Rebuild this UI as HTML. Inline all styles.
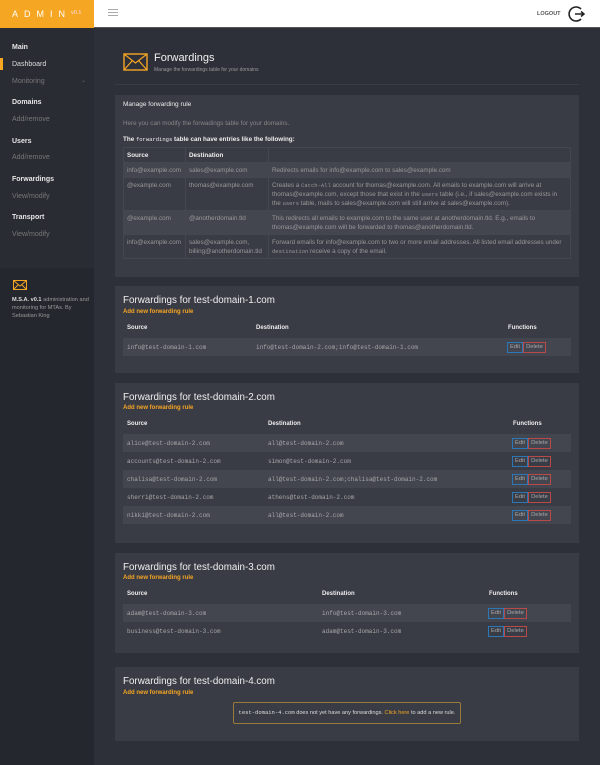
<!DOCTYPE html>
<html><head><meta charset="utf-8"><style>
*{box-sizing:border-box;margin:0;padding:0}
body{width:600px;height:765px;background:#2e3039;font-family:"Liberation Sans",sans-serif;position:relative;overflow:hidden;color:#bbb}
.abs{position:absolute}
#top{left:0;top:0;width:94px;height:28px;background:#f5a623}
#hdr{left:94px;top:0;width:506px;height:28px;background:#fff;border-bottom:1px solid #555}
#side{left:0;top:28px;width:94px;height:737px;background:#2a2c34}
.sh{position:absolute;left:12px;font-size:7px;font-weight:bold;color:#e6e6e6}
.si{position:absolute;left:12px;font-size:7px;color:#777}
.card{position:absolute;left:115px;width:464px;background:#393b45}
.ct{position:absolute;left:8px;font-size:9.8px;color:#f0f0f0}
.al{position:absolute;left:8px;font-size:6px;font-weight:bold;color:#f5a623}
.th{position:absolute;font-size:6px;font-weight:bold;color:#eee}
.row{position:absolute;left:8px;width:448px;height:18px}
.row.s{background:#43454f}
.m{position:absolute;font-family:"Liberation Mono",monospace;font-size:6px;color:#a8a8a8;top:6px}
.bt{position:absolute;top:4px;height:11px;font-size:5.8px;color:#aaa;line-height:9px;text-align:center}
.e{border:1px solid #2a78b5;width:16px}
.d{border:1px solid #b84a4a;width:23px}
table{border-collapse:collapse;font-size:6.3px;color:#999;position:absolute;left:8px;top:52px;width:448px}
td,th{border:1px solid #444650;padding:2.5px 3px;vertical-align:top;line-height:9px;text-align:left}
th{color:#eee;font-weight:bold}
tr.s td{background:#43454f}
code{font-family:"Liberation Mono",monospace;font-size:5.5px}
</style></head><body>
<div id="top" class="abs"><span class="abs" style="left:12px;top:9px;font-size:9px;letter-spacing:6px;color:#fff">ADMIN</span><span class="abs" style="left:71px;top:10px;font-size:5.5px;color:#fde">v0.1</span></div>
<div id="hdr" class="abs">
<div class="abs" style="left:14px;top:9px;width:10px;height:1px;background:#aaa;box-shadow:0 3px #aaa,0 6px #aaa"></div>
<span class="abs" style="left:443px;top:11px;font-size:5.5px;font-weight:bold;color:#555">LOGOUT</span>
<svg class="abs" style="left:474px;top:5px" width="18" height="18" viewBox="0 0 18 18"><path d="M13 4A7 7 0 1 0 13 14" fill="none" stroke="#222" stroke-width="1.6"/><path d="M7 9H16M13 6.5L16 9L13 11.5" fill="none" stroke="#222" stroke-width="1.5"/></svg>
</div>
<div id="side" class="abs">
<div class="sh" style="top:16px">Main</div>
<div class="abs" style="left:0;top:30px;width:3px;height:12px;background:#f5a623"></div>
<div class="sh" style="top:33px;font-weight:normal;color:#ddd">Dashboard</div>
<div class="si" style="top:50px">Monitoring</div><span class="abs" style="left:81px;top:49px;font-size:6px;color:#666">⌄</span>
<div class="sh" style="top:71px">Domains</div>
<div class="si" style="top:88px">Add/remove</div>
<div class="sh" style="top:110px">Users</div>
<div class="si" style="top:126px">Add/remove</div>
<div class="sh" style="top:148px">Forwardings</div>
<div class="si" style="top:165px">View/modify</div>
<div class="sh" style="top:186px">Transport</div>
<div class="si" style="top:203px">View/modify</div>
<div class="abs" style="left:0;top:240px;width:94px;height:497px;background:#25272e">
<svg class="abs" style="left:13px;top:12px" width="14" height="10" viewBox="0 0 14 10"><rect x=".5" y=".5" width="13" height="9" fill="none" stroke="#f5a623"/><path d="M.5 .5L7 6L13.5 .5M.5 9.5L5 5M13.5 9.5L9 5" fill="none" stroke="#f5a623"/></svg>
<div class="abs" style="left:12px;top:28px;font-size:5.6px;line-height:8px;color:#999;width:80px"><b style="color:#ddd">M.S.A. v0.1</b> administration and monitoring for MTAs. By Sebastian King</div>
</div>
</div>
<svg class="abs" style="left:123px;top:53px" width="25" height="18" viewBox="0 0 25 18"><rect x="1" y="1" width="23" height="16" fill="none" stroke="#f5a623" stroke-width="1.4"/><path d="M1 1L12.5 10L24 1M1 17L9 8M24 17L16 8" fill="none" stroke="#f5a623" stroke-width="1.2"/></svg>
<div class="abs" style="left:154px;top:52px;font-size:11px;color:#f0f0f0">Forwardings</div>
<div class="abs" style="left:154px;top:67px;font-size:5px;color:#999">Manage the forwardings table for your domains</div>
<div class="abs" style="left:115px;top:84px;width:464px;height:1px;background:#393b45"></div>

<div class="card" style="top:95px;height:182px">
<div class="abs" style="left:8px;top:6px;font-size:6.5px;color:#eee">Manage forwarding rule</div>
<div class="abs" style="left:8px;top:25px;font-size:6.3px;color:#888">Here you can modify the forwadings table for your domains.</div>
<div class="abs" style="left:8px;top:41px;font-size:6.3px;color:#eee;font-weight:bold">The <code style="font-weight:normal">forwardings</code> table can have entries like the following:</div>
<table>
<tr><th style="width:62px">Source</th><th style="width:83px">Destination</th><th></th></tr>
<tr class="s"><td>info@example.com</td><td>sales@example.com</td><td>Redirects emails for info@example.com to sales@example.com</td></tr>
<tr><td>@example.com</td><td>thomas@example.com</td><td>Creates a <code>Catch-All</code> account for thomas@example.com. All emails to example.com will arrive at thomas@example.com, except those that exist in the <code>users</code> table (i.e., if sales@example.com exists in the <code>users</code> table, mails to sales@example.com will still arrive at sales@example.com).</td></tr>
<tr class="s"><td>@example.com</td><td>@anotherdomain.tld</td><td>This redirects all emails to example.com to the same user at anotherdomain.tld. E.g., emails to thomas@example.com will be forwarded to thomas@anotherdomain.tld.</td></tr>
<tr><td>info@example.com</td><td>sales@example.com, billing@anotherdomain.tld</td><td>Forward emails for info@example.com to two or more email addresses. All listed email addresses under <code>destination</code> receive a copy of the email.</td></tr>
</table>
</div>

<div class="card" style="top:286px;height:87px">
<div class="ct" style="top:9px">Forwardings for test-domain-1.com</div>
<div class="al" style="top:23px">Add new forwarding rule</div>
<div class="th" style="left:12px;top:39px">Source</div><div class="th" style="left:141px;top:39px">Destination</div><div class="th" style="left:393px;top:39px">Functions</div>
<div class="row s" style="top:52px"><span class="m" style="left:4px">info@test-domain-1.com</span><span class="m" style="left:133px">info@test-domain-2.com;info@test-domain-1.com</span><span class="bt e" style="left:384px">Edit</span><span class="bt d" style="left:400px">Delete</span></div>
</div>

<div class="card" style="top:383px;height:160px">
<div class="ct" style="top:9px">Forwardings for test-domain-2.com</div>
<div class="al" style="top:22px">Add new forwarding rule</div>
<div class="th" style="left:12px;top:38px">Source</div><div class="th" style="left:153px;top:38px">Destination</div><div class="th" style="left:398px;top:38px">Functions</div>
<div class="row s" style="top:51px"><span class="m" style="left:4px">alice@test-domain-2.com</span><span class="m" style="left:145px">all@test-domain-2.com</span><span class="bt e" style="left:389px">Edit</span><span class="bt d" style="left:405px">Delete</span></div>
<div class="row" style="top:69px"><span class="m" style="left:4px">accounts@test-domain-2.com</span><span class="m" style="left:145px">simon@test-domain-2.com</span><span class="bt e" style="left:389px">Edit</span><span class="bt d" style="left:405px">Delete</span></div>
<div class="row s" style="top:87px"><span class="m" style="left:4px">chalisa@test-domain-2.com</span><span class="m" style="left:145px">all@test-domain-2.com;chalisa@test-domain-2.com</span><span class="bt e" style="left:389px">Edit</span><span class="bt d" style="left:405px">Delete</span></div>
<div class="row" style="top:105px"><span class="m" style="left:4px">sherri@test-domain-2.com</span><span class="m" style="left:145px">athens@test-domain-2.com</span><span class="bt e" style="left:389px">Edit</span><span class="bt d" style="left:405px">Delete</span></div>
<div class="row s" style="top:123px"><span class="m" style="left:4px">nikki@test-domain-2.com</span><span class="m" style="left:145px">all@test-domain-2.com</span><span class="bt e" style="left:389px">Edit</span><span class="bt d" style="left:405px">Delete</span></div>
</div>

<div class="card" style="top:553px;height:100px">
<div class="ct" style="top:9px">Forwardings for test-domain-3.com</div>
<div class="al" style="top:22px">Add new forwarding rule</div>
<div class="th" style="left:12px;top:38px">Source</div><div class="th" style="left:207px;top:38px">Destination</div><div class="th" style="left:374px;top:38px">Functions</div>
<div class="row s" style="top:51px"><span class="m" style="left:4px">adam@test-domain-3.com</span><span class="m" style="left:199px">info@test-domain-3.com</span><span class="bt e" style="left:365px">Edit</span><span class="bt d" style="left:381px">Delete</span></div>
<div class="row" style="top:69px"><span class="m" style="left:4px">business@test-domain-3.com</span><span class="m" style="left:199px">adam@test-domain-3.com</span><span class="bt e" style="left:365px">Edit</span><span class="bt d" style="left:381px">Delete</span></div>
</div>

<div class="card" style="top:667px;height:74px">
<div class="ct" style="top:9px">Forwardings for test-domain-4.com</div>
<div class="al" style="top:23px">Add new forwarding rule</div>
<div class="abs" style="left:118px;top:35px;width:228px;height:22px;border:1px solid #9a7a3a;border-radius:2px;font-size:5.6px;color:#ddd;line-height:20px;text-align:center"><code>test-domain-4.com</code> does not yet have any forwardings. <span style="color:#f5a623">Click here</span> to add a new rule.</div>
</div>
</body></html>
